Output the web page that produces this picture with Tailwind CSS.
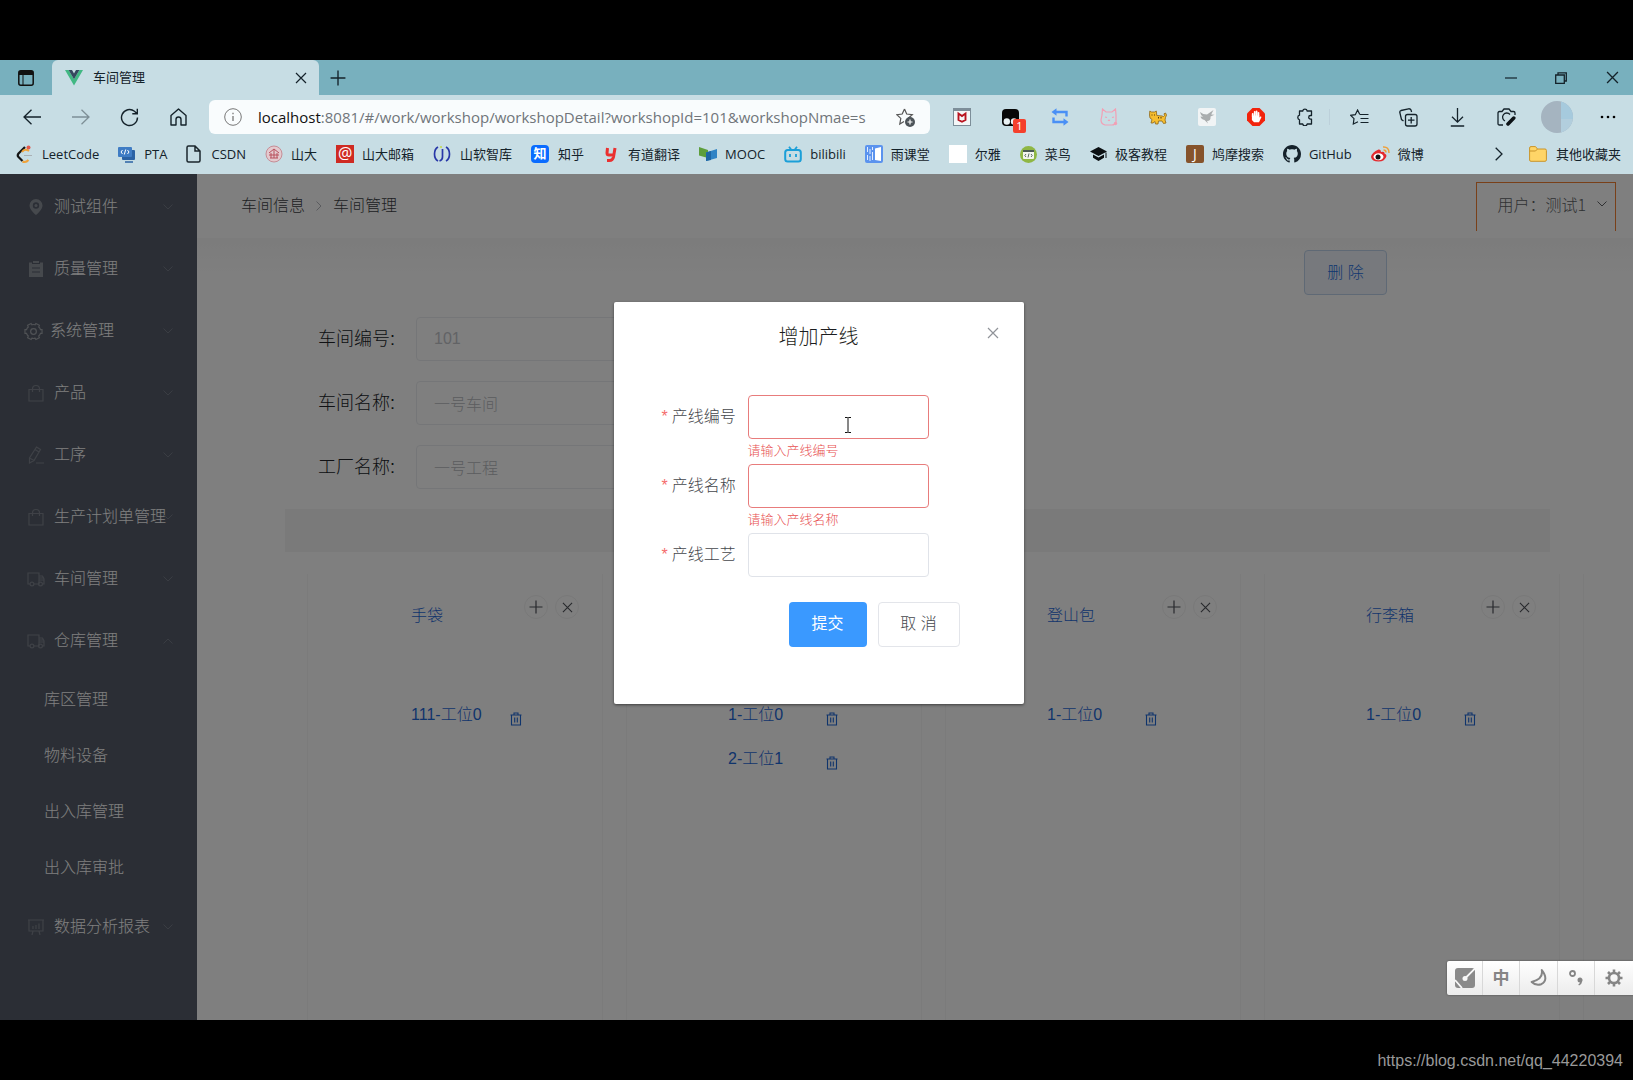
<!DOCTYPE html>
<html lang="zh-CN">
<head>
<meta charset="utf-8">
<meta name="viewport" content="width=device-width, initial-scale=1">
<title>车间管理</title>
<script src="https://cdn.jsdelivr.net/npm/@tailwindcss/browser@4"></script>
</head>
<body class="min-h-screen flex flex-col bg-black overflow-x-hidden font-['Liberation_Sans','Noto_Sans_CJK_SC',sans-serif] font-light">

<svg class="hidden" aria-hidden="true">
  <symbol id="down" viewBox="0 0 10 10"><path d="M.5 2.500 5 7 9.500 2.500" fill="none" stroke="currentColor"/></symbol>
  <symbol id="bag" viewBox="0 0 16 18"><path d="M1 5.500h14v11.500H1zM4.500 8V5a3.500 3.500 0 0 1 7 0v3" fill="none" stroke="currentColor" stroke-width="1.200"/></symbol>
  <symbol id="truck" viewBox="0 0 18 16"><path d="M3 13H1V2h11v11H7M12 5h3.500L17 8v5h-1M12 9h5M12 7h4" fill="none" stroke="currentColor" stroke-width="1.200"/><circle cx="5" cy="13" r="1.900" fill="none" stroke="currentColor" stroke-width="1.200"/><circle cx="13.500" cy="13" r="1.900" fill="none" stroke="currentColor" stroke-width="1.200"/></symbol>
  <symbol id="trash" viewBox="0 0 12 14"><path d="M.5 3h11M4 3V1h4v2M1.500 3v10h9V3M4.700 5.500v5M7.300 5.500v5" fill="none" stroke="currentColor" stroke-width="1.100"/></symbol>
  <symbol id="plus" viewBox="0 0 14 14"><path d="M7 .5v13M.5 7h13" fill="none" stroke="currentColor" stroke-width="1.200"/></symbol>
  <symbol id="x" viewBox="0 0 12 12"><path d="M1 1l10 10M11 1L1 11" fill="none" stroke="currentColor" stroke-width="1.200"/></symbol>
</svg>

<div class="h-15 shrink-0"></div>

<!-- Browser chrome -->
<header class="bg-[#c7dde4] text-[#14222a] font-['Open_Sans','Noto_Sans_CJK_SC',sans-serif] shrink-0 h-[114px] flex flex-col">
  <div class="h-[35px] bg-[#78b0be] flex items-stretch shrink-0">
    <button class="w-[52px] flex items-center justify-center rounded-br-md" aria-label="标签页操作">
      <svg class="w-4 h-4" viewBox="0 0 16 16"><rect x=".8" y=".8" width="14.400" height="14.400" rx="2" fill="none" stroke="#111" stroke-width="1.500"/><path d="M1 1h14v4H1z" fill="#111"/><path d="M5 5v10" stroke="#111"/></svg>
    </button>
    <div class="w-[267px] bg-[#c7dde4] rounded-t-md flex items-center pl-[13px] pr-3">
      <svg class="w-[18px] h-4" viewBox="0 0 18 16"><path d="M0 0h3.600L9 9.300 14.400 0H18L9 15.600z" fill="#41b883"/><path d="M3.600 0H7l2 3.500L11 0h3.400L9 9.300z" fill="#35495e"/></svg>
      <span class="ml-[10px] text-[13px] font-normal grow">车间管理</span>
      <button class="w-3 h-3" aria-label="关闭标签页"><svg class="w-3 h-3" viewBox="0 0 12 12"><use href="#x"/></svg></button>
    </div>
    <button class="w-[38px] flex items-center justify-center" aria-label="新建标签页"><svg class="w-4 h-4"><use href="#plus"/></svg></button>
    <div class="grow"></div>
    <button class="w-10 flex items-center justify-center" aria-label="最小化"><svg class="w-3 h-3" viewBox="0 0 12 12"><path d="M0 6h12" stroke="#14222a" stroke-width="1.200"/></svg></button>
    <button class="w-15 flex items-center justify-center" aria-label="还原"><svg class="w-3 h-3" viewBox="0 0 12 12"><path d="M.7 3h8.600v8.300H.7zM3 3V.8h8.300V9h-2" fill="none" stroke="#14222a" stroke-width="1.300"/></svg></button>
    <button class="w-[42px] flex items-center justify-center" aria-label="关闭"><svg class="w-[13px] h-[13px]"><use href="#x"/></svg></button>
  </div>

  <div class="h-[44px] flex items-center shrink-0 pl-[7px]">
    <button class="w-[49px] shrink-0 flex justify-center" aria-label="后退"><svg class="w-[18px] h-4" viewBox="0 0 18 16"><path d="M18 8H1M8.500.7 1 8l7.500 7.300" fill="none" stroke="currentColor" stroke-width="1.300"/></svg></button>
    <button class="w-[49px] shrink-0 flex justify-center text-[#7e8f96]" aria-label="前进"><svg class="w-[18px] h-4" viewBox="0 0 18 16"><path d="M0 8h17M9.500.7 17 8l-7.500 7.300" fill="none" stroke="currentColor" stroke-width="1.300"/></svg></button>
    <button class="w-[49px] shrink-0 flex justify-center" aria-label="刷新"><svg class="w-[19px] h-[19px]" viewBox="0 0 19 19"><path d="M17.500 9.500A8 8 0 1 1 14.500 3.300L17 5.700M17.300.8v5h-5" fill="none" stroke="currentColor" stroke-width="1.400"/></svg></button>
    <button class="w-[49px] shrink-0 flex justify-center" aria-label="主页"><svg class="w-[17px] h-[18px]" viewBox="0 0 17 18"><path d="M1 7.500 8.500 1 16 7.500V17h-5v-5.500a2.500 2.500 0 0 0-5 0V17H1z" fill="none" stroke="currentColor" stroke-width="1.400" stroke-linejoin="round"/></svg></button>
    <div class="ml-[6px] mr-[7px] h-[34px] flex-1 min-w-0 rounded-md bg-[#f9fcfd] flex items-center px-[15px]">
      <svg class="w-[18px] h-[18px] shrink-0" viewBox="0 0 18 18"><circle cx="9" cy="9" r="8.300" fill="none" stroke="#777"/><path d="M9 8v5M9 4.800v1.500" stroke="#777" stroke-width="1.300"/></svg>
      <div role="textbox" contenteditable="true" aria-label="地址栏" class="ml-4 grow min-w-0 overflow-hidden whitespace-nowrap outline-none text-[15px] text-[#70757a] font-normal"><span class="text-[#111]">localhost</span>:8081/#/work/workshop/workshopDetail?workshopId=101&amp;workshopNmae=s</div>
      <button aria-label="收藏" class="shrink-0"><svg class="w-[19px] h-[19px]" viewBox="0 0 19 19"><path d="M8.500 1l2.200 5 5.600.6-4.100 3.700M8.500 1 6.200 6 .8 6.700l4 3.700-1 5.600 4.200-2.500" fill="none" stroke="#555" stroke-width="1.200"/><circle cx="14" cy="14" r="5" fill="#4d5459"/><path d="M14 11.500v5M11.500 14h5" stroke="#fff" stroke-width="1.200"/></svg></button>
    </div>
    <button class="w-[49px] shrink-0 flex justify-center" aria-label="McAfee"><svg class="w-[18px] h-[18px]" viewBox="0 0 18 18"><rect x=".5" y=".5" width="17" height="17" fill="#f4f6f7" stroke="#7d8e99"/><path d="M0 0h18v3H0z" fill="#7d8e99"/><path d="M5.500 5.500v6.500L9 13.800l3.500-1.800V5.500L9 8z" fill="none" stroke="#b9131f" stroke-width="1.900"/></svg></button>
    <button class="w-[49px] shrink-0 flex justify-center relative" aria-label="Tampermonkey"><svg class="w-[17px] h-[17px]" viewBox="0 0 17 17"><rect width="17" height="17" rx="4" fill="#070707"/><circle cx="4.800" cy="12.500" r="3.200" fill="#e8f0f2"/><circle cx="12" cy="12.500" r="3.200" fill="#e8f0f2"/></svg><span class="absolute left-[27px] top-[10px] w-[13px] h-[14px] bg-[#f5402c] rounded-xs text-white text-[11px] leading-[14px] text-center font-normal">1</span></button>
    <button class="w-[49px] shrink-0 flex justify-center" aria-label="转换"><svg class="w-[18px] h-[18px]" viewBox="0 0 18 18"><path d="M5 4h10.500v4.500M13 14H2.500V9.500" fill="none" stroke="#4a90f5" stroke-width="2.400"/><path d="M.5 4 5.500.3v7.400zM17.500 14l-5-3.700v7.400z" fill="#4a90f5"/></svg></button>
    <button class="w-[49px] shrink-0 flex justify-center" aria-label="猫"><svg class="w-[18px] h-[18px]" viewBox="0 0 18 18"><path d="M2 7 2.500 1 6 4h6l3.500-3L16 7v7q-1 3-4 3H5q-4-1-4-5zM5 9l2 .5M12 9.500l2-.5M8 12l1 .6 1-.6" fill="none" stroke="#f2a0b5" stroke-width="1.200"/><circle cx="15.500" cy="15.500" r="1.700" fill="#f2a0b5"/></svg></button>
    <button class="w-[49px] shrink-0 flex justify-center" aria-label="小猫"><svg class="w-[18px] h-[15px]" viewBox="0 0 18 15"><path d="M.8 1 2.500 2h3L7.300 1l.5 4.500L13 6l1.500.5 1-1L15 3.800l1.500-.8 1 2-1 2.500-.5 2.500 1 3-2.500.5-1.500-2.500H9.500l-.5 3H6.500L6 11.500 4 13H2l1-3.500L1 8 .5 5z" fill="#f6bd2e" stroke="#8e6617" stroke-width=".8"/><path d="M2.500 5h1M5 5h1M9.500 7v1.500M12 7v1.500" stroke="#543a0c"/></svg></button>
    <button class="w-[49px] shrink-0 flex justify-center" aria-label="飞鸟"><svg class="w-[18px] h-[18px]" viewBox="0 0 18 18"><rect width="18" height="18" rx="2" fill="#f1f4f5"/><path d="M2 4q3 2.500 7 2.500L15.500 2l-2.300 4.500 3.300.3-4 1.700Q13 13 9 13l1 2.500-3.500-3.500Q3 11 2.500 8.500l2.500.3Q2.500 7 2 4z" fill="#a9adae"/></svg></button>
    <button class="w-[49px] shrink-0 flex justify-center" aria-label="AdBlock"><svg class="w-[18px] h-[18px]" viewBox="0 0 18 18"><path d="M5.500 0h7L18 5.500v7L12.500 18h-7L0 12.500v-7z" fill="#f2230c"/><path d="M5.700 8.500V5.800M7.700 8V3.800M9.600 8V3.300M11.500 8V4.800" stroke="#fff" stroke-width="1.700" stroke-linecap="round"/><path d="M4.900 7.500h7.500v2l1.300-1.200.8.800-2.500 5.200H7L4.900 12z" fill="#fff"/></svg></button>
    <button class="w-[49px] shrink-0 flex justify-center" aria-label="扩展"><svg class="w-[18px] h-[18px]" viewBox="0 0 18 18"><path d="M3.500 3h3.200a2.300 2.300 0 0 1 4.500 0h4.300v4.500h-1a1.800 1.800 0 0 0 0 3.600h1V16h-4.300a2.300 2.300 0 0 1-4.500 0H3.500v-4.200a2.400 2.400 0 0 1 0-4.600z" fill="none" stroke="currentColor" stroke-width="1.300" stroke-linejoin="round"/></svg></button>
    <span class="w-[6px] shrink-0 h-4 border-l border-[#bcd0da]"></span>
    <button class="w-[49px] shrink-0 flex justify-center" aria-label="收藏夹"><svg class="w-[19px] h-[17px]" viewBox="0 0 19 17"><path d="M9.800 5.500 7.600 1 5.300 5.700.7 6.300 4 9.700 3.300 15 8 12.800M10 5.500h8.500M10.500 9.500h8M10.500 13.500h8" fill="none" stroke="currentColor" stroke-width="1.200"/></svg></button>
    <button class="w-[49px] shrink-0 flex justify-center" aria-label="集锦"><svg class="w-[19px] h-[19px]" viewBox="0 0 19 19"><rect x="6.500" y="6.500" width="11.500" height="11.500" rx="2" fill="none" stroke="currentColor" stroke-width="1.300"/><path d="M12.200 9v6.500M9 12.200h6.500M4.500 13 2.500 11.500 .8 4.500Q.6 3 2 2.500L9.500.8Q11.500.6 12 2l.6 2" fill="none" stroke="currentColor" stroke-width="1.300"/></svg></button>
    <button class="w-[49px] shrink-0 flex justify-center" aria-label="下载"><svg class="w-[15px] h-[19px]" viewBox="0 0 15 19"><path d="M7.500 0v14M2 8.700l5.500 5.500L13 8.700M.8 18h13.400" fill="none" stroke="currentColor" stroke-width="1.300"/></svg></button>
    <button class="w-[49px] shrink-0 flex justify-center" aria-label="网页捕获"><svg class="w-[19px] h-[18px]" viewBox="0 0 19 18"><path d="M6 17H2.500Q1 17 1 15.500V5Q1 3.500 2.500 3.500H5L7 1h5l2 2.500h2.500Q18 3.500 18 5v2M13 6.500a4.200 4.200 0 1 0-5 6.500" fill="none" stroke="currentColor" stroke-width="1.300"/><path d="M16.800 10 11 16" stroke="#0c1216" stroke-width="3.500" stroke-linecap="round"/></svg></button>
    <button class="w-[51px] shrink-0 flex justify-center" aria-label="用户头像"><svg class="w-8 h-8 rounded-full" viewBox="0 0 32 32"><path d="M0 0h32v32H0z" fill="#a5b4c0"/><path d="M20 0h12v18H20z" fill="#a6cadd"/><path d="M20 18h12v14H20z" fill="#b2cedd"/></svg></button>
    <button class="w-[51px] shrink-0 flex justify-center" aria-label="更多"><svg class="w-4 h-1" viewBox="0 0 16 4"><circle cx="2" cy="2" r="1.300"/><circle cx="8" cy="2" r="1.300"/><circle cx="14" cy="2" r="1.300"/></svg></button>
  </div>

  <nav class="grow flex items-center text-[13px] font-normal pl-4 pr-3 pb-[5px] whitespace-nowrap gap-[19px] leading-none" aria-label="书签栏">
    <a href="#" class="flex items-center gap-2"><svg class="w-[18px] h-[18px]" viewBox="0 0 18 18"><path d="M9 2 2.500 8.500q-1.500 2 0 3.500l4 4" fill="none" stroke="#151515" stroke-width="2.200"/><path d="M6.500 16.500q3 1.500 6-1.500M6 7q3-4 7-1" fill="none" stroke="#f0a33a" stroke-width="2"/><path d="M8 10.500h8" stroke="#aab0b4"/><circle cx="12.500" cy="2.500" r="2" fill="#e4574a"/></svg>LeetCode</a>
    <a href="#" class="flex items-center gap-2"><svg class="w-[18px] h-[18px]" viewBox="0 0 18 18"><rect x="4" y="5" width="13" height="10" rx="1" fill="#2b62a4"/><rect x="0" y="2" width="14" height="10" rx="1" fill="#3f7cc4"/><path d="M4.500 5 3 7l1.500 2M9.500 5 11 7 9.500 9M7.700 4.500 6.300 9.500" stroke="#fff" fill="none"/><path d="M7 17h8" stroke="#2b62a4" stroke-width="1.500"/></svg>PTA</a>
    <a href="#" class="flex items-center gap-[10px]"><svg class="w-[15px] h-[18px]" viewBox="0 0 15 18"><path d="M1 2.500Q1 1 2.500 1H9l5 5v9.500q0 1.500-1.500 1.500h-10Q1 17 1 15.500zM9 1v5h5" fill="none" stroke="#1b262c" stroke-width="1.500"/></svg>CSDN</a>
    <a href="#" class="flex items-center gap-2"><svg class="w-[18px] h-[18px]" viewBox="0 0 18 18"><circle cx="9" cy="9" r="8" fill="#e3c9ce" stroke="#c68d96"/><path d="M4 8 9 4l5 4M4 10h10M5 13h8M9 4v9M6 8v5M12 8v5" stroke="#b8505d" fill="none"/></svg>山大</a>
    <a href="#" class="flex items-center gap-2"><span class="w-[18px] h-[18px] bg-[#cf2a22] text-white text-[16px] leading-[16px] text-center">@</span>山大邮箱</a>
    <a href="#" class="flex items-center gap-[9px]"><svg class="w-[18px] h-[18px]" viewBox="0 0 18 18"><path d="M5 2Q1.500 4 1.500 9T5 16M13 2q3.500 2 3.500 7T13 16M9.500 4v8q0 3-3 4" fill="none" stroke="#2838a8" stroke-width="1.700"/><circle cx="8" cy="2" r="1" fill="#c5d84a"/></svg>山软智库</a>
    <a href="#" class="flex items-center gap-[9px]"><span class="w-[18px] h-[18px] rounded-sm bg-[#0a6cff] text-white text-[13px] leading-[17px] text-center font-bold">知</span>知乎</a>
    <a href="#" class="flex items-center gap-[9px]"><svg class="w-4 h-[18px]" viewBox="0 0 16 18"><path d="M4.500 3 4 8q0 2 2 2h4M12 3l-1.500 9q-.8 3.500-4 3.500H4" fill="none" stroke="#ea3030" stroke-width="3"/></svg>有道翻译</a>
    <a href="#" class="flex items-center gap-2"><svg class="w-[18px] h-[15px]" viewBox="0 0 18 15"><path d="M0 0 9 3v8L0 8.500z" fill="#5d9e3c"/><path d="M18 2 7 5.500V14l11-3z" fill="#2f83c5"/><path d="M7 5.500 12 4v9l-5 1z" fill="#1f66a4"/></svg>MOOC</a>
    <a href="#" class="flex items-center gap-2"><svg class="w-[18px] h-[17px]" viewBox="0 0 18 17"><rect x="1.200" y="4" width="15.600" height="11.500" rx="2.500" fill="none" stroke="#1b9fd8" stroke-width="2"/><path d="M5 .8 7.500 4M13 .8 10.500 4M6 8v3M12 8v3" stroke="#1b9fd8" stroke-width="1.800"/></svg>bilibili</a>
    <a href="#" class="flex items-center gap-2"><svg class="w-[18px] h-[18px]" viewBox="0 0 18 18"><rect width="18" height="18" rx="2" fill="#5b93ee"/><path d="M2.500 2v5M5 4v5M2.500 10v5M5 11v5M7.500 2v3M7.500 7v8" stroke="#e2edff"/><path d="M10 3.500 16 2v14l-6-1z" fill="#fff"/></svg>雨课堂</a>
    <a href="#" class="flex items-center gap-2"><span class="w-[18px] h-[18px] bg-white"></span>尔雅</a>
    <a href="#" class="flex items-center gap-2"><svg class="w-[17px] h-[17px]" viewBox="0 0 17 17"><circle cx="8.500" cy="8.500" r="8.500" fill="#8fb744"/><rect x="3" y="4" width="11" height="9" rx="1" fill="#f3f5f0"/><path d="M3 4h11v2H3z" fill="#4b5a55"/><path d="M6 8 4.800 9.500 6 11M11 8l1.200 1.500L11 11M9 7.500 8 11.500" stroke="#4b5a55" fill="none" stroke-width=".9"/></svg>菜鸟</a>
    <a href="#" class="flex items-center gap-2"><svg class="w-[17px] h-[14px]" viewBox="0 0 17 14"><path d="M8.500 0 17 4.500 8.500 9 0 4.500zM3 7.500l5.500 3 5.500-3v3.300L8.500 14 3 10.800zM15.500 5.500h1V11h-1z" fill="#0b0f12"/></svg>极客教程</a>
    <a href="#" class="flex items-center gap-2"><span class="w-[18px] h-[18px] rounded-xs bg-[#86532b] text-white text-[14px] leading-[18px] text-center">J</span>鸠摩搜索</a>
    <a href="#" class="flex items-center gap-2"><svg class="w-[18px] h-[18px]" viewBox="0 0 16 16"><path fill="#14212a" d="M8 0C3.580 0 0 3.580 0 8c0 3.540 2.290 6.530 5.470 7.590.4.070.55-.17.55-.38 0-.19-.01-.82-.01-1.490-2.010.37-2.530-.49-2.690-.94-.09-.23-.48-.94-.82-1.130-.28-.15-.68-.52-.01-.53.630-.01 1.080.58 1.230.82.720 1.210 1.870.87 2.330.66.070-.52.280-.87.510-1.070-1.780-.2-3.640-.89-3.640-3.950 0-.87.310-1.590.82-2.150-.08-.2-.36-1.020.08-2.120 0 0 .67-.21 2.200.82.640-.18 1.320-.27 2-.27s1.360.09 2 .27c1.530-1.040 2.200-.82 2.200-.82.440 1.100.16 1.920.08 2.120.51.560.82 1.270.82 2.150 0 3.070-1.870 3.750-3.650 3.950.290.250.540.730.540 1.480 0 1.070-.01 1.930-.01 2.200 0 .21.150.46.550.38A8.010 8.010 0 0 0 16 8c0-4.420-3.580-8-8-8z"/></svg>GitHub</a>
    <a href="#" class="flex items-center gap-2"><svg class="w-[19px] h-[16px]" viewBox="0 0 19 16"><path d="M7.500 3.500Q1 6 0 11q1 4.500 7.500 4.500T15.500 10q0-2-2-2.500.5-2.500-3.500-1.500 0-3-2.500-2.500z" fill="#e32a2e"/><ellipse cx="7.500" cy="10.800" rx="5" ry="3.500" fill="#fff"/><circle cx="7" cy="11" r="2.500" fill="#111"/><path d="M12 1q6-.5 6 6M12.500 4q2.500 0 2.500 2.500" fill="none" stroke="#efa03a" stroke-width="1.500"/></svg>微博</a>
    <button class="ml-auto mr-[7px]" aria-label="更多书签"><svg class="w-2 h-[14px]" viewBox="0 0 8 14"><path d="M.7.7 7 7 .7 13.300" fill="none" stroke="currentColor" stroke-width="1.300"/></svg></button>
    <a href="#" class="flex items-center gap-[9px]"><svg class="w-[18px] h-4" viewBox="0 0 18 16"><path d="M.6 2Q.6.600 2 .6h4.500l2 2.400H16q1.400 0 1.400 1.400v9.500q0 1.400-1.400 1.400H2Q.6 15.300.6 14z" fill="#ffd567" stroke="#c9942a"/><path d="M.6 5h5.900l2-2" fill="none" stroke="#c9942a"/></svg>其他收藏夹</a>
  </nav>
</header>

<!-- Web page -->
<div class="grow relative flex overflow-hidden bg-white h-0 min-h-[600px]">
  <aside class="w-[197px] shrink-0 bg-[#565d6a] text-white text-base pt-0.5">
    <ul>
      <li><a href="#" class="h-[62px] flex items-center pl-7 pr-6"><svg class="w-4 h-4 text-[#8d929b] shrink-0" viewBox="0 0 16 16"><path fill-rule="evenodd" d="M8 0a6.500 6.500 0 0 1 6.500 6.500C14.500 10 10.500 14 8 16 5.500 14 1.500 10 1.500 6.500A6.500 6.500 0 0 1 8 0zm0 3.300a3.200 3.200 0 1 0 0 6.400 3.200 3.200 0 0 0 0-6.400z" fill="currentColor"/><circle cx="8" cy="6.500" r="1.500" fill="currentColor"/></svg><span class="ml-[10px] flex-1 min-w-0 whitespace-nowrap">测试组件</span><svg class="w-[10px] h-[10px] text-[#757b86] shrink-0"><use href="#down"/></svg></a></li>
      <li><a href="#" class="h-[62px] flex items-center pl-7 pr-6"><svg class="w-4 h-4 text-[#8d929b] shrink-0" viewBox="0 0 16 16"><path d="M1 1.500h3V3h8V1.500h3V16H1z" fill="currentColor"/><path d="M5 0h6v2H5z" fill="currentColor"/><path d="M4 7h8M4 11h8" stroke="#565d6a" stroke-width="1.200"/></svg><span class="ml-[10px] flex-1 min-w-0 whitespace-nowrap">质量管理</span><svg class="w-[10px] h-[10px] text-[#757b86] shrink-0"><use href="#down"/></svg></a></li>
      <li><a href="#" class="h-[62px] flex items-center pl-6 pr-6"><svg class="w-[19px] h-[19px] text-[#a0a4ab] shrink-0" viewBox="0 0 20 20"><path d="M7.500 1.500 8.300 3q1.700-.8 3.400 0l.8-1.500 3.700 2-.7 1.700q1.400 1 1.800 2.800h1.700v4h-1.700q-.5 1.800-1.800 2.800l.7 1.700-3.700 2-.8-1.500q-1.700.7-3.400 0l-.8 1.500-3.700-2 .7-1.700Q3.100 13.800 2.700 12H1V8h1.700q.4-1.800 1.800-2.800l-.7-1.700z" fill="none" stroke="currentColor" stroke-width="1.200"/><circle cx="10" cy="10" r="3" fill="none" stroke="currentColor" stroke-width="1.300"/></svg><span class="ml-[7px] flex-1 min-w-0 whitespace-nowrap">系统管理</span><svg class="w-[10px] h-[10px] text-[#757b86] shrink-0"><use href="#down"/></svg></a></li>
      <li><a href="#" class="h-[62px] flex items-center pl-7 pr-6"><svg class="w-4 h-[18px] text-[#7e838e] shrink-0"><use href="#bag"/></svg><span class="ml-[10px] flex-1 min-w-0 whitespace-nowrap">产品</span><svg class="w-[10px] h-[10px] text-[#757b86] shrink-0"><use href="#down"/></svg></a></li>
      <li><a href="#" class="h-[62px] flex items-center pl-7 pr-6"><svg class="w-4 h-[18px] text-[#7e838e] shrink-0" viewBox="0 0 16 18"><path d="M8.500 1 12.500 3.500 6 14.500 1.500 17 1.500 12zM7 3.500l4 2.500M1.500 12l4.500 2.500M8 17h8" fill="none" stroke="currentColor" stroke-width="1.200"/></svg><span class="ml-[10px] flex-1 min-w-0 whitespace-nowrap">工序</span><svg class="w-[10px] h-[10px] text-[#757b86] shrink-0"><use href="#down"/></svg></a></li>
      <li><a href="#" class="h-[62px] flex items-center pl-7 pr-6"><svg class="w-4 h-[18px] text-[#7e838e] shrink-0"><use href="#bag"/></svg><span class="ml-[10px] flex-1 min-w-0 whitespace-nowrap">生产计划单管理</span><svg class="w-[10px] h-[10px] text-[#757b86] shrink-0"><use href="#down"/></svg></a></li>
      <li><a href="#" class="h-[62px] flex items-center pl-[27px] pr-6"><svg class="w-[18px] h-4 text-[#7e838e] shrink-0"><use href="#truck"/></svg><span class="ml-[9px] flex-1 min-w-0 whitespace-nowrap">车间管理</span><svg class="w-[10px] h-[10px] text-[#757b86] shrink-0"><use href="#down"/></svg></a></li>
      <li>
        <a href="#" class="h-[62px] flex items-center pl-[27px] pr-6"><svg class="w-[18px] h-4 text-[#7e838e] shrink-0"><use href="#truck"/></svg><span class="ml-[9px] flex-1 min-w-0 whitespace-nowrap">仓库管理</span><svg class="w-[10px] h-[10px] text-[#757b86] shrink-0 rotate-180"><use href="#down"/></svg></a>
        <ul>
          <li><a href="#" class="h-14 flex items-center pl-11">库区管理</a></li>
          <li><a href="#" class="h-14 flex items-center pl-11">物料设备</a></li>
          <li><a href="#" class="h-14 flex items-center pl-11">出入库管理</a></li>
          <li><a href="#" class="h-14 flex items-center pl-11">出入库审批</a></li>
        </ul>
      </li>
      <li><a href="#" class="h-[62px] flex items-center pl-7 pr-6"><svg class="w-4 h-4 text-[#7e838e] shrink-0" viewBox="0 0 16 16"><path d="M0 1h16M1 1v11h14V1M5 12l-1 4M11 12l1 4M5 7v3M8 6v4M11 4.500V10" fill="none" stroke="currentColor" stroke-width="1.200"/></svg><span class="ml-[10px] flex-1 min-w-0 whitespace-nowrap">数据分析报表</span><svg class="w-[10px] h-[10px] text-[#757b86] shrink-0"><use href="#down"/></svg></a></li>
    </ul>
  </aside>

  <div class="grow min-w-0 flex flex-col">
    <div class="h-16 shrink-0 flex items-center justify-between pl-[44px] pr-[17px]">
      <nav class="flex items-center text-base text-[#3c3f45]" aria-label="面包屑">
        <a href="#">车间信息</a>
        <svg class="w-[10px] h-[10px] mx-[9px] -rotate-90 text-[#b4b7bd]"><use href="#down"/></svg>
        <a href="#">车间管理</a>
      </nav>
      <button class="w-[140px] h-[49px] self-start mt-2 border border-b-0 border-[#f28032] flex items-center justify-end pr-2 pb-[6px] text-base text-[#606266] whitespace-nowrap font-['Noto_Sans_CJK_SC',sans-serif]">用户：测试1<svg class="w-[10px] h-[10px] ml-[11px]"><use href="#down"/></svg></button>
    </div>

    <main class="grow min-h-0 flex flex-col pt-3 bg-linear-to-b from-[#f8f8f8] to-white to-[40px]">
      <div class="flex justify-end pr-[246px] shrink-0">
        <button class="w-[83px] h-[45px] rounded border border-[#bfd3ea] bg-[#eef3fa] text-[#1f6fe0] text-base">删 除</button>
      </div>
      <form class="mt-[22px] pl-[121px] flex flex-col gap-5 shrink-0">
        <div class="flex items-center"><label for="wid" class="w-[98px] text-lg text-[#202328]">车间编号:</label><input id="wid" value="101" disabled class="w-[300px] h-11 rounded border border-[#ebedf1] bg-white px-[17px] text-base text-[#c4c6cb]"></div>
        <div class="flex items-center"><label for="wname" class="w-[98px] text-lg text-[#202328]">车间名称:</label><input id="wname" value="一号车间" disabled class="w-[300px] h-11 rounded border border-[#ebedf1] bg-white px-[17px] text-base text-[#b8babf]"></div>
        <div class="flex items-center"><label for="fname" class="w-[98px] text-lg text-[#202328]">工厂名称:</label><input id="fname" value="一号工程" disabled class="w-[300px] h-11 rounded border border-[#ebedf1] bg-white px-[17px] text-base text-[#b8babf]"></div>
      </form>
      <div class="mt-5 ml-[88px] mr-[83px] h-[43px] shrink-0 bg-[#f5f5f5]"></div>
      <div class="mt-[22px] pl-[110px] grow flex gap-[23px] overflow-hidden text-base text-[#1f68d8]">
        <section class="w-[296px] shrink-0 border-x border-[#f6f6f6] pl-[103px]">
          <div class="flex h-[83px]">
            <h3 class="grow pt-[30px]">手袋</h3>
            <div class="flex gap-[7px] pt-[21px] pr-[23px] text-[#50535a]">
              <button class="w-6 h-6 rounded-full border border-[#f1f1f1] flex items-center justify-center" aria-label="添加工位"><svg class="w-[14px] h-[14px]"><use href="#plus"/></svg></button>
              <button class="w-6 h-6 rounded-full border border-[#f1f1f1] flex items-center justify-center" aria-label="删除产线"><svg class="w-[11px] h-[11px]"><use href="#x"/></svg></button>
            </div>
          </div>
          <ul class="mt-9">
            <li class="h-11 flex items-center"><a href="#" class="w-[99px]">111-工位0</a><button class="pt-2" aria-label="删除工位"><svg class="w-3 h-[14px]"><use href="#trash"/></svg></button></li>
          </ul>
        </section>
        <section class="w-[296px] shrink-0 border-x border-[#f6f6f6] pl-[101px]">
          <ul class="mt-[119px]">
            <li class="h-11 flex items-center"><a href="#" class="w-[98px]">1-工位0</a><button class="pt-2" aria-label="删除工位"><svg class="w-3 h-[14px]"><use href="#trash"/></svg></button></li>
            <li class="h-11 flex items-center"><a href="#" class="w-[98px]">2-工位1</a><button class="pt-2" aria-label="删除工位"><svg class="w-3 h-[14px]"><use href="#trash"/></svg></button></li>
          </ul>
        </section>
        <section class="w-[296px] shrink-0 border-x border-[#f6f6f6] pl-[101px]">
          <div class="flex h-[83px]">
            <h3 class="grow pt-[30px]">登山包</h3>
            <div class="flex gap-[7px] pt-[21px] pr-[23px] text-[#50535a]">
              <button class="w-6 h-6 rounded-full border border-[#f1f1f1] flex items-center justify-center" aria-label="添加工位"><svg class="w-[14px] h-[14px]"><use href="#plus"/></svg></button>
              <button class="w-6 h-6 rounded-full border border-[#f1f1f1] flex items-center justify-center" aria-label="删除产线"><svg class="w-[11px] h-[11px]"><use href="#x"/></svg></button>
            </div>
          </div>
          <ul class="mt-9">
            <li class="h-11 flex items-center"><a href="#" class="w-[98px]">1-工位0</a><button class="pt-2" aria-label="删除工位"><svg class="w-3 h-[14px]"><use href="#trash"/></svg></button></li>
          </ul>
        </section>
        <section class="w-[296px] shrink-0 border-x border-[#f6f6f6] pl-[101px]">
          <div class="flex h-[83px]">
            <h3 class="grow pt-[30px]">行李箱</h3>
            <div class="flex gap-[7px] pt-[21px] pr-[23px] text-[#50535a]">
              <button class="w-6 h-6 rounded-full border border-[#f1f1f1] flex items-center justify-center" aria-label="添加工位"><svg class="w-[14px] h-[14px]"><use href="#plus"/></svg></button>
              <button class="w-6 h-6 rounded-full border border-[#f1f1f1] flex items-center justify-center" aria-label="删除产线"><svg class="w-[11px] h-[11px]"><use href="#x"/></svg></button>
            </div>
          </div>
          <ul class="mt-9">
            <li class="h-11 flex items-center"><a href="#" class="w-[98px]">1-工位0</a><button class="pt-2" aria-label="删除工位"><svg class="w-3 h-[14px]"><use href="#trash"/></svg></button></li>
          </ul>
        </section>
        <section class="w-[296px] shrink-0 border-x border-[#f6f6f6]"></section>
      </div>
    </main>
  </div>

  <!-- Modal dialog -->
  <div class="absolute inset-0 bg-black/50 flex justify-center items-start pt-32 pl-1">
    <div role="dialog" aria-labelledby="dlg" class="relative w-[410px] h-[402px] bg-white rounded-xs shadow-[0_1px_3px_rgba(0,0,0,0.5)]">
      <h2 id="dlg" class="pt-[21px] text-xl leading-7 text-center text-[#1c1d20]">增加产线</h2>
      <button class="absolute right-[25px] top-[25px] text-[#909399]" aria-label="关闭"><svg class="w-3 h-3"><use href="#x"/></svg></button>
      <form class="mt-[44px] pl-[48px] text-base text-[#45474c]">
        <div class="flex h-[69px]">
          <label for="l1" class="w-[86px] h-11 flex items-center gap-1"><span class="text-[#f56c6c]">*</span>产线编号</label>
          <div class="relative">
            <input id="l1" class="block w-[181px] h-11 rounded border border-[#e87c7c] px-4 outline-none">
            <p class="text-[13px] leading-[23px] text-[#e85050]">请输入产线编号</p>
            <svg class="absolute left-24 top-[22px] w-2 h-4" viewBox="0 0 8 16"><path d="M1 .5h2.500L4 1l.5-.5H7M4 1v14M1 15.500h2.500L4 15l.5.500H7" fill="none" stroke="#111"/></svg>
          </div>
        </div>
        <div class="flex h-[69px]">
          <label for="l2" class="w-[86px] h-11 flex items-center gap-1"><span class="text-[#f56c6c]">*</span>产线名称</label>
          <div>
            <input id="l2" class="block w-[181px] h-11 rounded border border-[#e87c7c] px-4 outline-none">
            <p class="text-[13px] leading-[23px] text-[#e85050]">请输入产线名称</p>
          </div>
        </div>
        <div class="flex h-[69px]">
          <label for="l3" class="w-[86px] h-11 flex items-center gap-1"><span class="text-[#f56c6c]">*</span>产线工艺</label>
          <input id="l3" class="block w-[181px] h-11 rounded border border-[#e0e3e9] px-4 outline-none">
        </div>
        <div class="flex gap-[11px] pl-[127px]">
          <button type="submit" class="w-[78px] h-[45px] pb-0.5 rounded bg-[#3a99ff] text-white font-normal">提交</button>
          <button type="button" class="w-[82px] h-[45px] pb-0.5 rounded border border-[#e3e5ea] bg-white">取 消</button>
        </div>
      </form>
    </div>
  </div>

  <!-- Input method toolbar -->
  <div class="absolute right-0 bottom-[25px] h-[34px] flex bg-linear-to-b from-white to-[#ececec] rounded-l-xs text-[#858585] shadow-[0_0_2px_rgba(0,0,0,0.5)]">
    <button class="w-9 flex items-center justify-center border-r border-[#d8d8d8]" aria-label="输入法"><svg class="w-5 h-5" viewBox="0 0 20 20"><rect width="20" height="20" rx="3" fill="#8a8a8a"/><path d="M10 10.500 20 .5M0 12l7 8" stroke="#f8f8f8" stroke-width="1.800"/><circle cx="10" cy="10.500" r="2.500" fill="#f8f8f8"/></svg></button>
    <button class="w-[37px] flex items-center justify-center border-r border-[#d8d8d8] text-[17px] leading-none font-bold" aria-label="中文">中</button>
    <button class="w-[38px] flex items-center justify-center border-r border-[#d8d8d8]" aria-label="半角"><svg class="w-[18px] h-[18px]" viewBox="0 0 16 16"><path d="M10.500 1Q12 9 1.500 11.500 5 15 10 13.500 17 9.500 10.500 1z" fill="none" stroke="currentColor" stroke-width="1.800" stroke-linejoin="round"/></svg></button>
    <button class="w-[37px] flex items-center justify-center border-r border-[#d8d8d8]" aria-label="标点"><svg class="w-[14px] h-4" viewBox="0 0 14 16"><circle cx="3.500" cy="3.500" r="2.500" fill="none" stroke="currentColor" stroke-width="1.800"/><path d="M11 7.500a2.500 2.500 0 0 1 2.500 3Q13 14 10 15.500l-.7-1q1.500-.8 1.700-2a2.500 2.500 0 0 1 0-5z" fill="currentColor"/></svg></button>
    <button class="w-[38px] flex items-center justify-center" aria-label="设置"><svg class="w-[18px] h-[18px]" viewBox="0 0 18 18"><circle cx="9" cy="9" r="5" fill="none" stroke="currentColor" stroke-width="2.600"/><path d="M9 .5v3M9 14.500v3M.5 9h3M14.500 9h3M3 3l2 2M13 13l2 2M3 15l2-2M13 5l2-2" stroke="currentColor" stroke-width="2.600"/></svg></button>
  </div>
</div>

<footer class="h-15 shrink-0 flex items-center justify-end pr-[10px] pt-[22px] text-base leading-5 font-normal text-[#999]">https://blog.csdn.net/qq_44220394</footer>
</body>
</html>
